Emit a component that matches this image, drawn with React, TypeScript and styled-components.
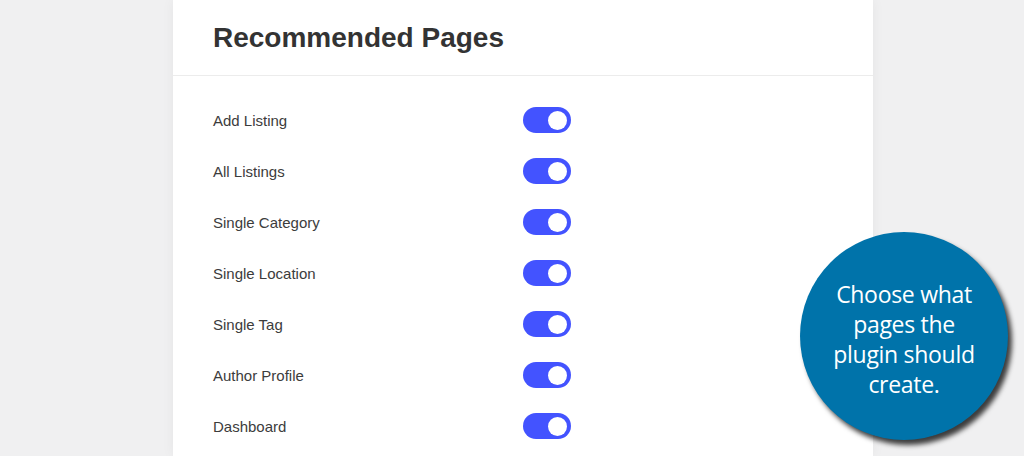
import React from "react";
import styled, { createGlobalStyle } from "styled-components";

const Global = createGlobalStyle`
  html, body { margin: 0; padding: 0; background: #f0f0f1; }
  body { width: 1024px; height: 456px; overflow: hidden; font-family: "Liberation Sans", Arial, sans-serif; }
`;

const Page = styled.div`
  position: relative;
  width: 1024px;
  height: 456px;
  display: flex;
  padding-left: 173px;
  box-sizing: border-box;
`;

const Card = styled.div`
  width: 700px;
  height: 456px;
  background: #fff;
  box-shadow: 0 0 12px rgba(0, 0, 0, 0.05);
  display: flex;
  flex-direction: column;
`;

const Header = styled.div`
  height: 76px;
  border-bottom: 1px solid #ececec;
  display: flex;
  align-items: center;
  padding-left: 40px;
  box-sizing: border-box;
`;

const Title = styled.h2`
  margin: 0;
  font-size: 28px;
  font-weight: 700;
  color: #333;
  padding-top: 0;
`;

const List = styled.div`
  display: flex;
  flex-direction: column;
  gap: 25px;
  padding: 31px 40px 0;
`;

const Row = styled.div`
  display: flex;
  align-items: center;
  height: 26px;
`;

const Label = styled.span`
  width: 310px;
  font-size: 15px;
  color: #3c3c3c;
`;

const Toggle = styled.div<{ $on: boolean }>`
  width: 48px;
  height: 26px;
  border-radius: 13px;
  background: ${(p) => (p.$on ? "#4353ff" : "#ccc")};
  display: flex;
  align-items: center;
  justify-content: ${(p) => (p.$on ? "flex-end" : "flex-start")};
  padding: 0 4px;
  box-sizing: border-box;
`;

const Knob = styled.div`
  width: 19px;
  height: 19px;
  border-radius: 50%;
  background: #fff;
`;

const Bubble = styled.div`
  position: absolute;
  left: 800px;
  top: 232px;
  width: 208px;
  height: 208px;
  border-radius: 50%;
  background: #0073aa;
  box-shadow: 4px 5px 5px rgba(0, 0, 0, 0.75);
  display: flex;
  align-items: center;
  justify-content: center;
  text-align: center;
  color: #fff;
  font-family: "Open Sans", sans-serif;
  font-size: 23px;
  line-height: 30px;
  letter-spacing: -0.3px;
`;

const BubbleText = styled.div`
  padding-top: 6px;
`;

const pages = [
  "Add Listing",
  "All Listings",
  "Single Category",
  "Single Location",
  "Single Tag",
  "Author Profile",
  "Dashboard",
];

export default function App() {
  return (
    <>
      <Global />
      <Page>
        <Card>
          <Header>
            <Title>Recommended Pages</Title>
          </Header>
          <List>
            {pages.map((p) => (
              <Row key={p}>
                <Label>{p}</Label>
                <Toggle $on>
                  <Knob />
                </Toggle>
              </Row>
            ))}
          </List>
        </Card>
        <Bubble>
          <BubbleText>
            Choose what
            <br />
            pages the
            <br />
            plugin should
            <br />
            create.
          </BubbleText>
        </Bubble>
      </Page>
    </>
  );
}
